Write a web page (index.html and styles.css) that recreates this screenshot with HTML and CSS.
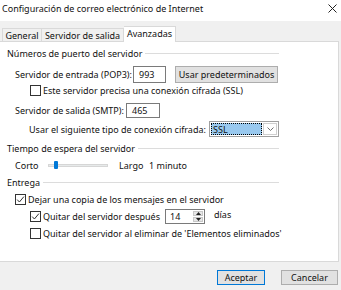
FILE: index.html
```html
<!DOCTYPE html>
<html lang="es">
<head>
<meta charset="utf-8">
<title>Configuración de correo electrónico de Internet</title>
<link rel="stylesheet" href="styles.css">
</head>
<body>
<div class="dialog">
  <div class="titlebar">
    <span class="title">Configuración de correo electrónico de Internet</span>
    <svg class="close" width="9" height="9" viewBox="0 0 9 9"><path d="M0.5 0.5 L8.5 8.5 M8.5 0.5 L0.5 8.5" stroke="#222" stroke-width="1" fill="none"/></svg>
  </div>
  <div class="tabs">
    <div class="tab tab-general">General</div>
    <div class="tab tab-salida">Servidor de salida</div>
    <div class="tab tab-active">Avanzadas</div>
  </div>
  <div class="panel">
    <div class="group-head r-a"><span>Números de puerto del servidor</span><span class="rule"></span></div>
    <div class="row r-b">
      <span class="lbl lbl-pop">Servidor de entrada (POP3):</span>
      <span class="field f-pop">993</span>
      <span class="btn btn-def">Usar predeterminados</span>
    </div>
    <div class="row r-c">
      <span class="cb"></span>
      <span>Este servidor precisa una conexión cifrada (SSL)</span>
    </div>
    <div class="row r-d">
      <span class="lbl lbl-smtp">Servidor de salida (SMTP):</span>
      <span class="field f-smtp">465</span>
    </div>
    <div class="row r-e">
      <span class="lbl lbl-enc">Usar el siguiente tipo de conexión cifrada:</span>
      <span class="select">
        <span class="sel-val">SSL</span>
        <span class="sel-arrow"><svg width="7" height="4" viewBox="0 0 7 4"><path d="M0.5 0.5 L3.5 3.5 L6.5 0.5" stroke="#707070" stroke-width="1" fill="none"/></svg></span>
      </span>
    </div>
    <div class="group-head r-f"><span>Tiempo de espera del servidor</span><span class="rule"></span></div>
    <div class="row r-g">
      <span class="lbl lbl-corto">Corto</span>
      <span class="track"><span class="thumb"></span></span>
      <span class="lbl lbl-largo">Largo</span>
      <span>1 minuto</span>
    </div>
    <div class="group-head r-h"><span>Entrega</span><span class="rule"></span></div>
    <div class="row r-i">
      <span class="cb"><svg width="9" height="9" viewBox="0 0 9 9"><path d="M1.2 4.6 L3.4 7 L7.9 1.6" stroke="#333" stroke-width="1" fill="none"/></svg></span>
      <span>Dejar una copia de los mensajes en el servidor</span>
    </div>
    <div class="row r-j">
      <span class="cb"><svg width="9" height="9" viewBox="0 0 9 9"><path d="M1.2 4.6 L3.4 7 L7.9 1.6" stroke="#333" stroke-width="1" fill="none"/></svg></span>
      <span class="lbl lbl-quitar">Quitar del servidor después</span>
      <span class="spin">
        <span class="spin-val">14</span>
        <span class="spin-btns">
          <span class="spin-btn"><svg width="5" height="3" viewBox="0 0 5 3"><path d="M0 3 L2.5 0 L5 3 Z" fill="#222"/></svg></span>
          <span class="spin-btn"><svg width="5" height="3" viewBox="0 0 5 3"><path d="M0 0 L2.5 3 L5 0 Z" fill="#222"/></svg></span>
        </span>
      </span>
      <span class="dias">días</span>
    </div>
    <div class="row r-k">
      <span class="cb"></span>
      <span>Quitar del servidor al eliminar de 'Elementos eliminados'</span>
    </div>
  </div>
  <div class="actions">
    <span class="btn btn-ok">Aceptar</span>
    <span class="btn btn-cancel">Cancelar</span>
  </div>
</div>
</body>
</html>
```
FILE: styles.css
```css
* { box-sizing: border-box; }
html, body { margin: 0; padding: 0; }
body {
  width: 341px;
  height: 290px;
  overflow: hidden;
  background: #f0f0f0;
  font-family: "Noto Sans", "DejaVu Sans", sans-serif;
  font-size: 9px;
  color: #111;
}
.dialog { width: 341px; height: 290px; display: flex; flex-direction: column; }

.titlebar {
  height: 21px;
  flex: none;
  background: #fff;
  display: flex;
  align-items: center;
  justify-content: space-between;
  padding: 0 4px 4px 2px;
}
.title { font-size: 9px; white-space: nowrap; }
.close { display: block; }

.tabs {
  height: 20px;
  flex: none;
  display: flex;
  align-items: flex-end;
  padding-left: 2px;
}
.tab {
  height: 13px;
  display: flex;
  align-items: center;
  justify-content: center;
  border: 1px solid #d9d9d9;
  border-bottom: none;
  border-left: none;
  background: #f0f0f0;
  white-space: nowrap;
}
.tab-general { width: 40px; border-left: 1px solid #d9d9d9; }
.tab-salida { width: 82px; }
.tab-active {
  width: 52px;
  height: 16px;
  background: #fff;
  border-left: none;
  position: relative;
  z-index: 1;
  margin-bottom: -1px;
  padding-bottom: 2px;
}

.panel {
  width: 339px;
  height: 221px;
  flex: none;
  background: #fff;
  border: 1px solid #d9d9d9;
  border-left: none;
}

.row { display: flex; align-items: center; white-space: nowrap; }
.group-head {
  display: flex;
  align-items: center;
  width: 279px;
  height: 14px;
  padding-left: 7px;
  white-space: nowrap;
}
.rule { flex: 1; height: 1px; background: #dcdcdc; margin-left: 3px; }

.r-a { margin-top: 4px; }
.r-b { margin-top: 6px; height: 17px; padding-left: 15px; }
.r-c { margin-top: 1px; height: 13px; padding-left: 30px; }
.r-d { margin-top: 6px; height: 15px; padding-left: 15px; }
.r-e { margin-top: 3px; height: 16px; padding-left: 29px; }
.r-f { margin-top: 4px; }
.r-g { margin-top: 3px; height: 14px; padding-left: 15px; }
.r-h { margin-top: 3px; }
.r-i { margin-top: 3px; height: 14px; padding-left: 15px; }
.r-j { margin-top: 2px; height: 16px; padding-left: 30px; }
.r-k { margin-top: 2px; height: 14px; padding-left: 30px; }

.lbl { display: block; flex: none; }
.lbl-pop { width: 118px; }
.lbl-smtp { width: 111px; }
.lbl-enc { width: 180px; }
.lbl-corto { width: 33px; }
.lbl-largo { width: 30px; margin-left: 11px; }
.lbl-quitar { width: 122px; }

.field {
  display: flex;
  align-items: center;
  height: 100%;
  background: #fff;
  border: 1px solid #7a7a7a;
  padding-left: 5px;
}
.f-pop { width: 33px; }
.f-smtp { width: 34px; }

.btn {
  display: flex;
  align-items: center;
  justify-content: center;
  background: #e1e1e1;
  border: 1px solid #adadad;
  white-space: nowrap;
}
.btn-def { width: 103px; height: 17px; margin-left: 9px; }

.cb {
  width: 11px;
  height: 11px;
  flex: none;
  border: 1px solid #333;
  background: #fff;
  margin-right: 2px;
  display: flex;
  align-items: center;
  justify-content: center;
}
.cb svg { display: block; }

.select {
  display: flex;
  width: 70px;
  height: 16px;
  border: 1px solid #a0a0a0;
  background: #fff;
  padding: 1px;
}
.sel-val {
  flex: 1;
  background: #99c9ef;
  outline: 1px dotted #000;
  outline-offset: -1px;
  padding-left: 2px;
  display: flex;
  align-items: center;
}
.sel-arrow {
  width: 14px;
  margin-left: 1px;
  border: 1px solid #cfcfcf;
  display: flex;
  align-items: center;
  justify-content: center;
}
.sel-arrow svg { display: block; }

.track {
  display: block;
  position: relative;
  width: 60px;
  height: 3px;
  background: #e7eaea;
  border: 1px solid #d6d6d6;
  flex: none;
}
.thumb {
  position: absolute;
  left: 5px;
  top: -4px;
  width: 4px;
  height: 8px;
  background: #0078d7;
  border-radius: 1px;
}

.spin {
  display: flex;
  width: 40px;
  height: 15px;
  border: 1px solid #7a7a7a;
  background: #fff;
}
.spin-val { flex: 1; display: flex; align-items: center; padding-left: 4px; padding-top: 1px; }
.spin-btns { width: 11px; display: flex; flex-direction: column; padding: 1px 1px 1px 0; gap: 1px; }
.spin-btn {
  flex: 1;
  background: #e6e6e6;
  border: 1px solid #c8c8c8;
  display: flex;
  align-items: center;
  justify-content: center;
}
.spin-btn svg { display: block; }
.dias { margin-left: 9px; margin-top: -3px; }

.actions {
  display: flex;
  justify-content: flex-end;
  gap: 16px;
  margin-top: 8px;
  padding-right: 3px;
}
.btn-ok { width: 48px; height: 15px; border-color: #0078d7; }
.btn-cancel { width: 57px; height: 15px; }
```
